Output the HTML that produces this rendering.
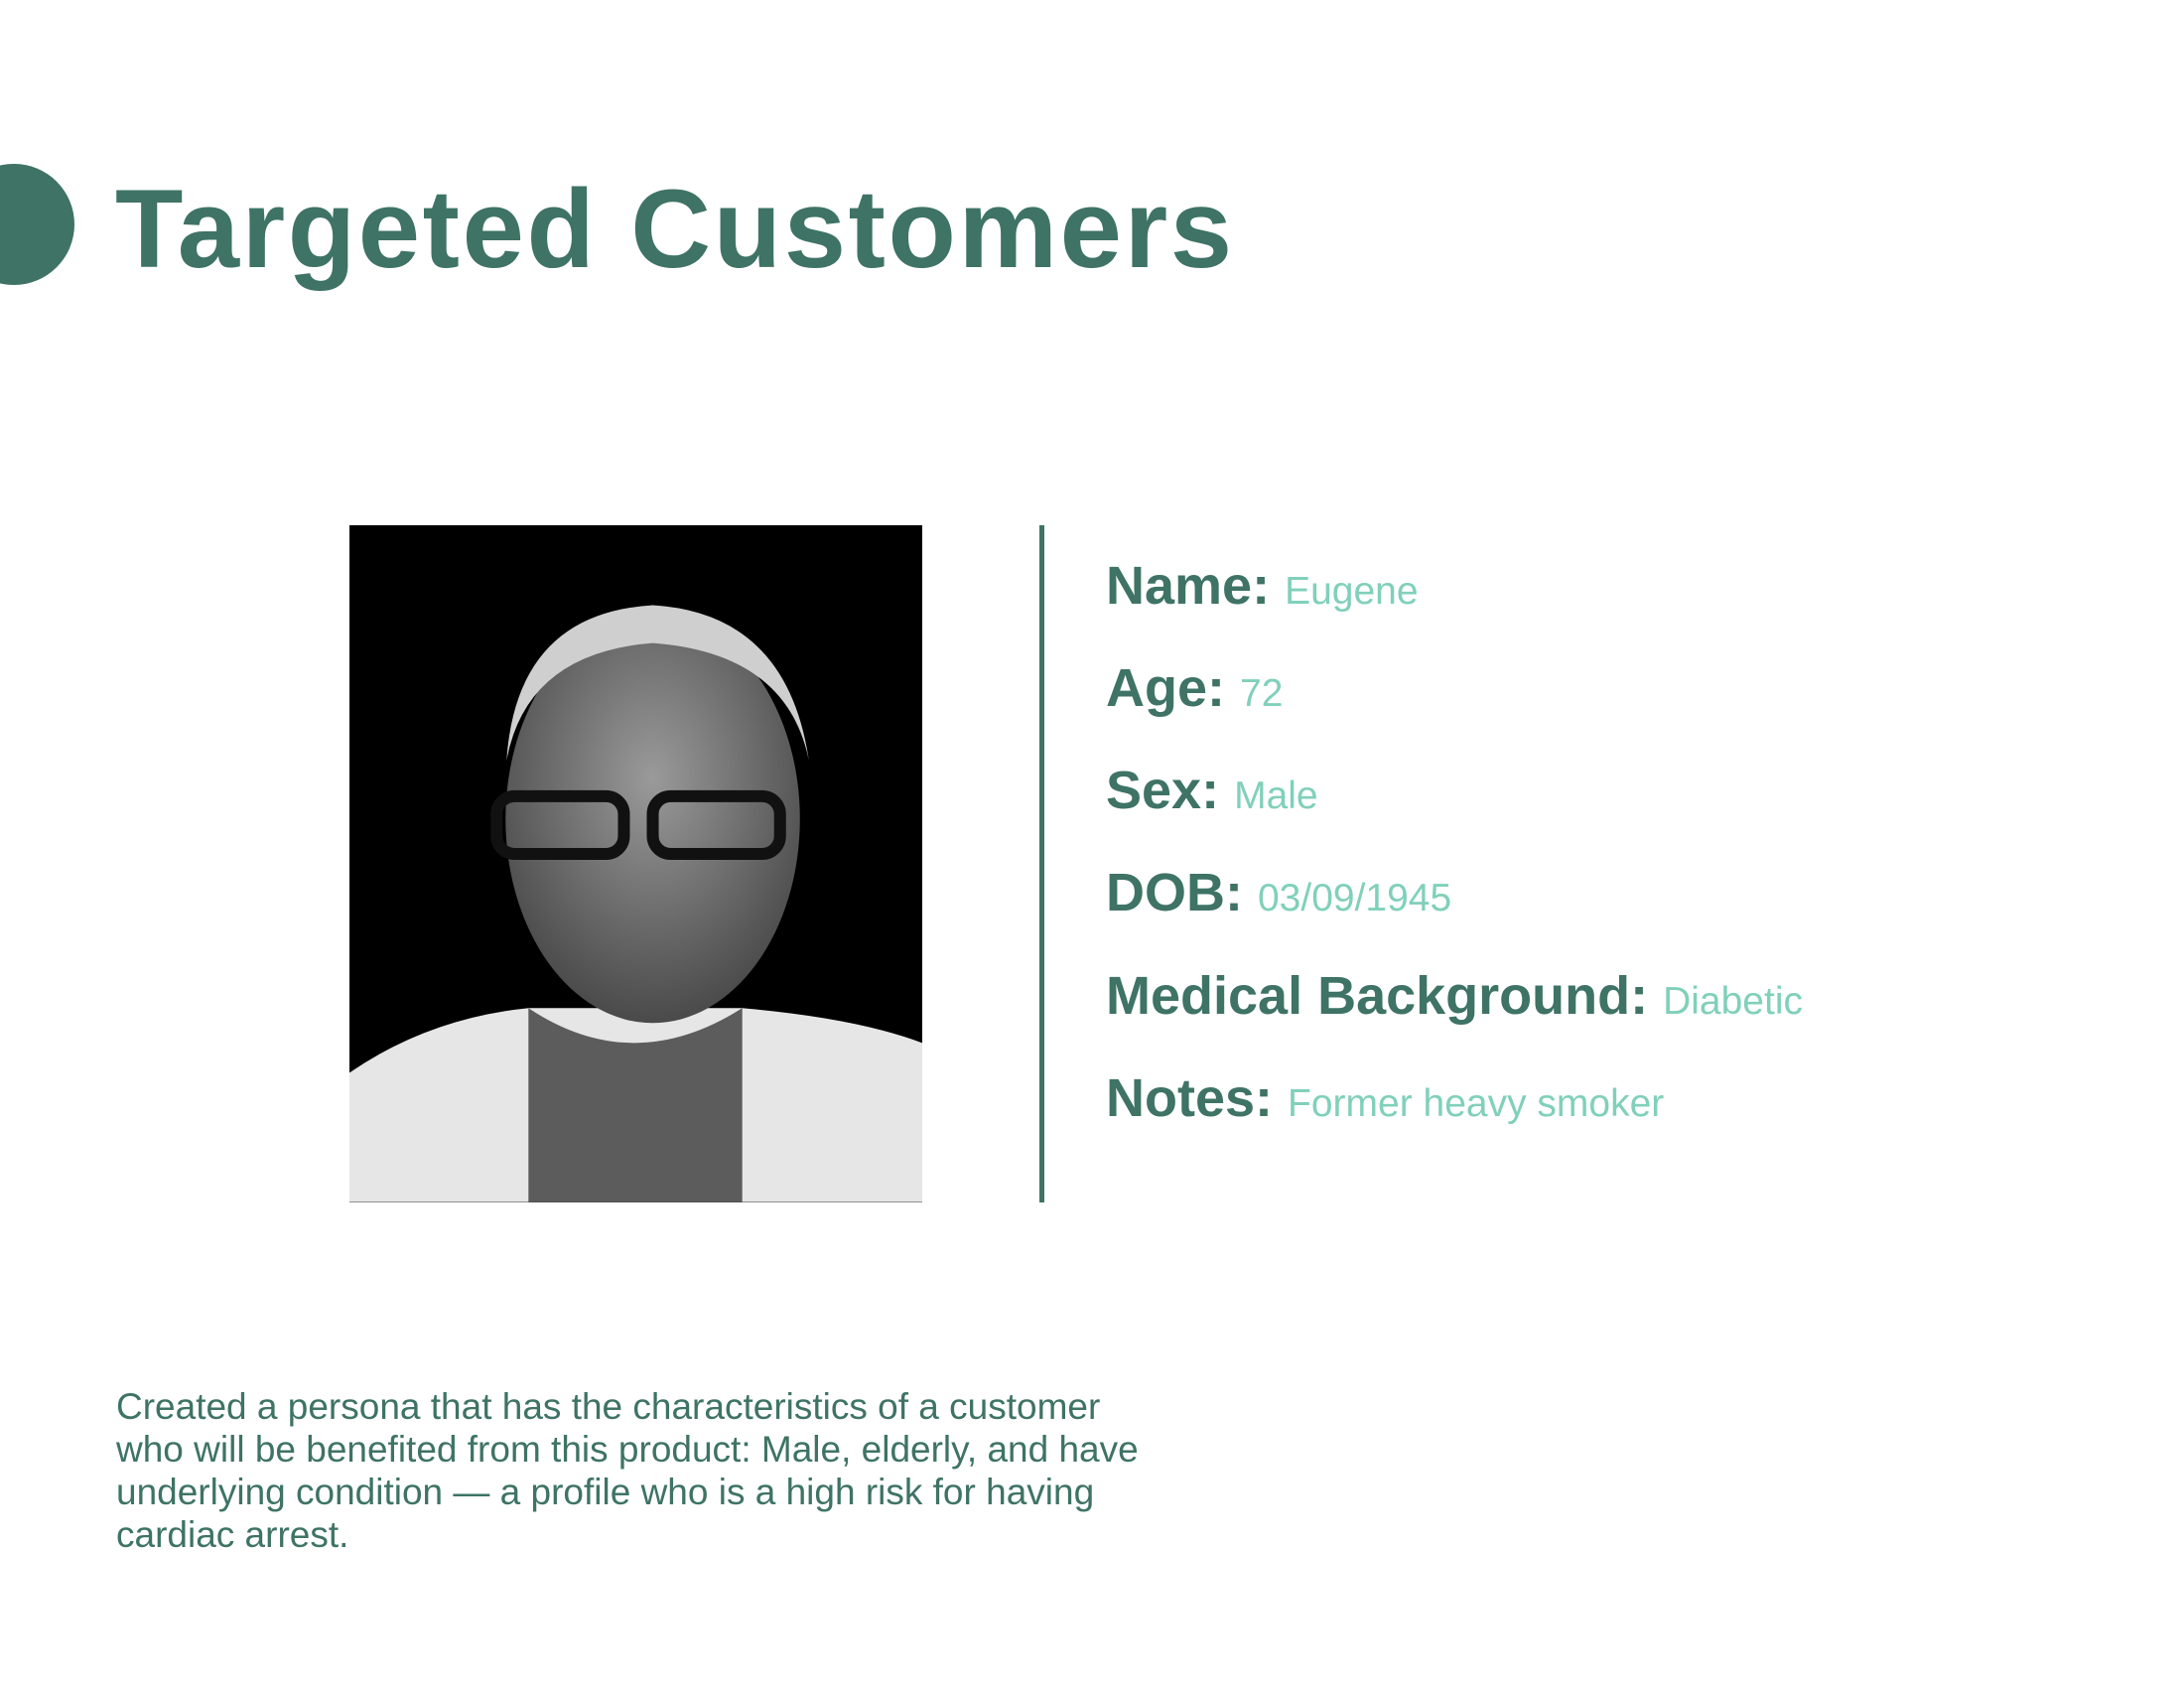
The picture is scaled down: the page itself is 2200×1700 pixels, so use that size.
<!DOCTYPE html>
<html><head><meta charset="utf-8"><style>
html,body{margin:0;padding:0;background:#fff;}
body{width:2200px;height:1700px;position:relative;overflow:hidden;font-family:"Liberation Sans",sans-serif;color:#3e7365;}
.circ{position:absolute;left:-47px;top:165px;width:122px;height:122px;border-radius:50%;background:#3e7365;}
h1{position:absolute;left:116px;top:166px;margin:0;font-size:112px;font-weight:bold;line-height:130px;letter-spacing:2.6px;}
.photo{position:absolute;left:352px;top:529px;width:577px;height:682px;background:#000;overflow:hidden;}
.vl{position:absolute;left:1047px;top:529px;width:5px;height:682px;background:#3e7365;}
.f{position:absolute;left:1114px;font-size:54px;font-weight:bold;white-space:nowrap;}
.f span{font-weight:normal;font-size:39px;color:#80d0ba;}
p{position:absolute;left:117px;top:1395px;margin:0;width:1040px;font-size:37px;line-height:43px;}
</style></head><body>
<div class="circ"></div>
<h1>Targeted Customers</h1>
<div class="photo">
<svg width="577" height="682" viewBox="0 0 576 680">
<defs><radialGradient id="g" cx="50%" cy="40%" r="60%"><stop offset="0" stop-color="#9a9a9a"/><stop offset="1" stop-color="#4a4a4a"/></radialGradient></defs>
<path d="M0 550 Q80 495 180 485 L395 485 Q510 495 576 520 L576 680 L0 680Z" fill="#e6e6e6"/>
<path d="M180 485 Q285 555 395 485 L395 680 L180 680Z" fill="#5c5c5c"/>
<ellipse cx="305" cy="295" rx="148" ry="205" fill="url(#g)"/>
<path d="M158 236 Q168 88 305 80 Q440 88 462 236 Q440 128 305 118 Q178 128 158 236Z" fill="#cfcfcf"/>
<rect x="148" y="272" width="128" height="58" rx="18" fill="none" stroke="#111" stroke-width="12"/>
<rect x="305" y="272" width="128" height="58" rx="18" fill="none" stroke="#111" stroke-width="12"/>
</svg>
</div>
<div class="vl"></div>
<div class="f" style="top:559px">Name: <span>Eugene</span></div>
<div class="f" style="top:662px">Age: <span>72</span></div>
<div class="f" style="top:765px">Sex: <span>Male</span></div>
<div class="f" style="top:868px">DOB: <span>03/09/1945</span></div>
<div class="f" style="top:972px">Medical Background: <span>Diabetic</span></div>
<div class="f" style="top:1075px">Notes: <span>Former heavy smoker</span></div>
<p>Created a persona that has the characteristics of a customer who will be benefited from this product: Male, elderly, and have underlying condition — a profile who is a high risk for having cardiac arrest.</p>
</body></html>
